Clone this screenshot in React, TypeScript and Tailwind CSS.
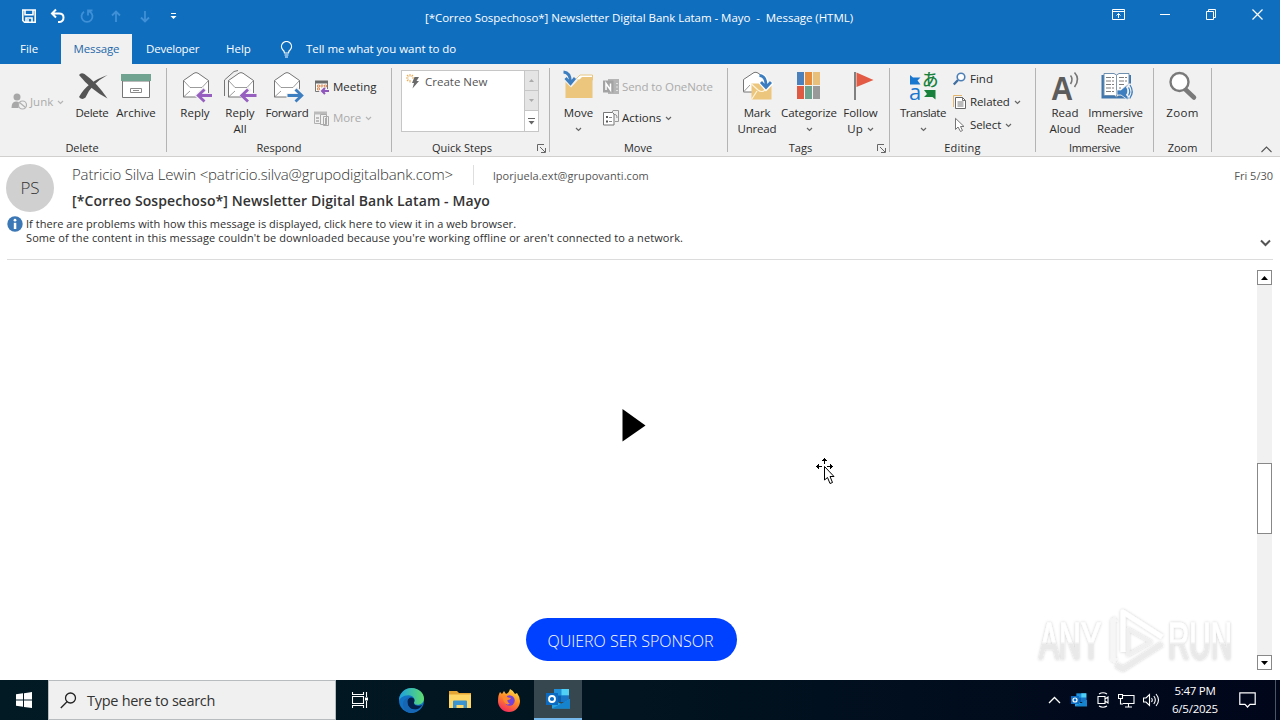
import type { ReactNode } from "react"
import clsx from "clsx"

const Chevron = ({ className = "text-[#666]" }: { className?: string }) => (
  <svg width="7" height="5" viewBox="0 0 7 5" fill="none" stroke="currentColor" strokeWidth="1.2" className={className}>
    <path d="M1 1l2.5 2.5L6 1" />
  </svg>
)

const Icon = ({ children, size = 32 }: { children: ReactNode; size?: number }) => (
  <svg width={size} height={size} viewBox={`0 0 ${size} ${size}`} fill="none" className="shrink-0 overflow-visible">
    {children}
  </svg>
)

type BigProps = { icon: ReactNode; l1: string; l2?: string; chevron?: boolean; className: string }

const BigButton = ({ icon, l1, l2, chevron, className }: BigProps) => (
  <button className={clsx("flex shrink-0 flex-col items-center pt-[6px] text-[11.5px] leading-4 whitespace-nowrap", className)}>
    {icon}
    <span className="mt-[3px] h-4">{l1}</span>
    <span className="flex h-4 items-center gap-1">
      {l2}
      {chevron && <Chevron />}
    </span>
  </button>
)

type SmallProps = { icon: ReactNode; label: string; chevron?: boolean; disabled?: boolean; className?: string }

const SmallButton = ({ icon, label, chevron, disabled, className }: SmallProps) => (
  <button className={clsx("flex items-center text-[11.5px] whitespace-nowrap", disabled && "text-[#ababab]", className)}>
    {icon}
    <span className="ml-[3px]">{label}</span>
    {chevron && <span className="ml-1"><Chevron className={disabled ? "text-[#b5b5b5]" : "text-[#666]"} /></span>}
  </button>
)

type GroupProps = { title: string; className: string; titleClass?: string; launcher?: boolean; children: ReactNode }

const Group = ({ title, className, titleClass, launcher, children }: GroupProps) => (
  <div className={clsx("flex shrink-0", className)}>
    <div className="flex min-w-0 flex-1 flex-col">
      <div className="flex h-[76px]">{children}</div>
      <div className="flex h-4 items-center">
        <span className={clsx("flex-1 text-center text-[11px] leading-4", titleClass)}>{title}</span>
        {launcher && (
          <svg width="9" height="9" viewBox="0 0 9 9" fill="none" stroke="#666" className="mr-[3px]">
            <path d="M.5 7V.5H7M3 3l5 5M8.5 4v4.5H4" />
          </svg>
        )}
      </div>
    </div>
    <div className="mt-1 h-[84px] w-px bg-[#b4b4b4]" />
  </div>
)

const Envelope = () => (
  <g stroke="#757575">
    <path d="M4.5 10.5L15 3.2Q17 2 19 3.2L29.5 10.5V27H4.5Z" fill="#fff" />
    <path d="M4.5 10.5L11 17.5H23L29.5 10.5M4.5 27L11 21" strokeWidth=".9" strokeOpacity=".8" />
  </g>
)

const Spark = () => (
  <path d="M4 0v2.5M4 6v2.5M0 4h2.5M6 4h2M1 1l1.5 1.5M7 1L5.5 2.5M1 7l1.5-1.5" stroke="#e8b05e" strokeWidth="1.1" />
)

const icons = {
  del: (
    <Icon>
      <path d="M3 5Q5 2 8.500 4Q21 13 31.500 28.500Q15 20 3 5Z" fill="#555" />
      <path d="M31.500 5Q15 14 9.500 27.500Q6 30.500 3 27Q11 12 31.500 5Z" fill="#555" />
    </Icon>
  ),
  archive: (
    <Icon>
      <path d="M2.500 11V27.500H29.500V11Z" fill="#fff" stroke="#757575" />
      <path d="M1 4H31V11H1Z" fill="#71a391" />
      <path d="M10.500 18.500h11v4h-11z" stroke="#8a8a8a" />
      <path d="M13 20.500h6" stroke="#8a8a8a" />
    </Icon>
  ),
  reply: (
    <Icon>
      <Envelope />
      <path d="M34 25.500H19.500M26 18.500L19 25.500L26 32.500" stroke="#f1f1f1" strokeWidth="5" />
      <path d="M33 25.500H19.500M25.500 19.500L19.200 25.500L25.500 31.500" stroke="#965fc0" strokeWidth="2.800" />
    </Icon>
  ),
  replyAll: (
    <Icon>
      <path d="M.5 26V10L10 1.500L14 .5" stroke="#757575" />
      <Envelope />
      <path d="M34 25.500H19.500M26 18.500L19 25.500L26 32.500" stroke="#f1f1f1" strokeWidth="5" />
      <path d="M32.500 25.500H18M24 19.500L17.700 25.500L24 31.500" stroke="#965fc0" strokeWidth="2.800" />
    </Icon>
  ),
  forward: (
    <Icon>
      <g transform="translate(-1 0)"><Envelope /></g>
      <path d="M15.500 25.500H31M24.500 18.500L31.500 25.500L24.500 32.500" stroke="#f1f1f1" strokeWidth="5" />
      <path d="M16.500 25.500H30.500M24.500 19.500L30.800 25.500L24.500 31.500" stroke="#3c7ebf" strokeWidth="2.800" />
    </Icon>
  ),
  move: (
    <Icon>
      <path d="M13 9L17 5H29.500V10H13Z" fill="#fff" stroke="#e8c680" />
      <path d="M2.500 10H16L19 7H29.500V28H2.500Z" fill="#ecc67d" />
      <path d="M.5 2Q8.500 2 8.500 13M2.500 8.500L8 14L13 8.500" stroke="#f1f1f1" strokeWidth="5" />
      <path d="M.5 2Q7.500 2.500 7.500 12.500M2.500 8L7.500 13.500L12 8" stroke="#3c7ebf" strokeWidth="2.800" />
    </Icon>
  ),
  mark: (
    <Icon>
      <path d="M2.500 9.500L13 2.500Q15 1.800 17 3L26 10V22H2.500Z" fill="#fff" stroke="#757575" />
      <path d="M2.500 22L9 15" stroke="#999" />
      <path d="M10.500 13.500H30.500V29.500H10.500Z" fill="#ecc67d" />
      <path d="M10.500 14L17 20Q20.500 23 24 20L30.500 14M10.500 29.500L16 21" stroke="#fff4dc" strokeWidth="1.200" />
      <path d="M19 5.500Q26 6 25 18M19.500 12L25 18L31 12" stroke="#fff" strokeWidth="4.800" />
      <path d="M18.500 5.500Q25.500 6 25 17M20 12L25 17.500L30 12" stroke="#3c7ebf" strokeWidth="2.800" />
    </Icon>
  ),
  categorize: (
    <Icon>
      <path d="M4 2h7v13H4z" fill="#4b80bd" />
      <path d="M12 2h7v13h-7z" fill="#e58c3d" />
      <path d="M20 2h7v13h-7z" fill="#e8c07b" />
      <path d="M4 16h7v13H4z" fill="#df5a43" />
      <path d="M12 16h7v13h-7z" fill="#6ea18e" />
      <path d="M20 16h7v13h-7z" fill="#999" />
    </Icon>
  ),
  follow: (
    <Icon>
      <path d="M9 2h2v28H9z" fill="#808080" />
      <path d="M11.500 2.500L28.500 10L11.500 17Z" fill="#e35b45" />
    </Icon>
  ),
  translate: (
    <Icon>
      <path d="M3 5L6 7.500H13.500L10.500 10.500L13.500 14.500H3Z" fill="#1a77d0" />
      <path d="M17 20H28.500V29.500L25.500 27H17L20 24Z" fill="#18823c" />
      <text x="15" y="16" fontSize="16.500" fontWeight="500" fill="#18823c" className="font-['Noto_Sans_CJK_JP',sans-serif]">あ</text>
      <text x="2" y="30" fontSize="22" fill="#1a77d0" className="font-['Open_Sans',sans-serif]">a</text>
    </Icon>
  ),
  readAloud: (
    <Icon>
      <text x="2" y="30" fontSize="33" fontWeight="bold" fill="#5c5c5c" textLength="22" lengthAdjust="spacingAndGlyphs" className="font-['Liberation_Sans',sans-serif]">A</text>
      <path d="M21.500 5.500Q24.500 9 21.500 14M25.500 2.500Q31.500 9 25.500 17" stroke="#777" strokeWidth="1.600" />
    </Icon>
  ),
  reader: (
    <Icon>
      <path d="M1.500 5H31V28.500H1.500Z" fill="#3f76ad" />
      <path d="M4 3.500H14L16.500 5L19 3.500H29V25.500H18.500L16.500 27L14.500 25.500H4Z" fill="#fff" stroke="#6f8faf" />
      <path d="M16.500 5V27" stroke="#8199b3" />
      <path d="M6 7.500h8M6 11h8M6 14.500h8M6 18h8M6 21.500h8M19 7.500h8M19 11h8M19 14.500h6M19 18h2" stroke="#7d7d7d" strokeDasharray="5 1" />
      <path d="M17 20h4l7-6v16l-7-5h-4z" fill="#3c7ebf" stroke="#f1f1f1" strokeWidth=".8" />
      <path d="M27 16q4 5 0 10M29 14q6 7 0 14" stroke="#f1f1f1" strokeWidth="3" />
      <path d="M28.500 17.500q2.500 4 0 8M30 15q4.500 6.500 0 13" stroke="#3c7ebf" strokeWidth="1.200" />
    </Icon>
  ),
  zoom: (
    <Icon>
      <path d="M18.500 19.500L27 27.500" stroke="#7a7a7a" strokeWidth="4.500" strokeLinecap="round" />
      <circle cx="12.500" cy="12" r="9" fill="#fff" stroke="#7a7a7a" strokeWidth="2.400" />
    </Icon>
  ),
  junk: (
    <Icon size={16}>
      <circle cx="6" cy="3" r="3.500" fill="#a8a8a8" />
      <path d="M.5 14Q.5 7 5.500 7.500Q8.500 7.500 8.500 10L7.500 14Z" fill="#a8a8a8" />
      <circle cx="11.500" cy="11" r="4" fill="#f1f1f1" stroke="#b0b0b0" strokeWidth="1.200" />
      <path d="M8.500 8.500l6 5" stroke="#b0b0b0" strokeWidth="1.200" />
    </Icon>
  ),
  meeting: (
    <Icon size={16}>
      <path d="M1.500 2.500h12v10h-12z" fill="#fff" stroke="#777" />
      <path d="M1 1.500h13v3H1z" fill="#6b6b6b" />
      <path d="M3.500 6h2v2h-2zM3.500 9h2v2h-2zM7 6h2v2h-2zM10.500 6h2v2h-2z" stroke="#d47a3c" strokeWidth=".8" />
      <path d="M15 12H8M11 8.500L7.500 12L11 15.500" stroke="#f1f1f1" strokeWidth="4" />
      <path d="M15 12H8.500M11 9L8 12L11 15" stroke="#8f56bb" strokeWidth="2" />
    </Icon>
  ),
  more: (
    <Icon size={16}>
      <path d="M.5 2.500h12v11h-12z" stroke="#b0b0b0" />
      <path d="M0 1.500h13v3H0zM2 7h3v2H2zM2 10h3v2H2z" fill="#bbb" />
      <path d="M6.500 4.500h6v10h-6zM9.500 6.500h5v9h-5z" fill="#f1f1f1" stroke="#aaa" />
      <path d="M11 8h2v6h-2z" fill="#aaa" />
    </Icon>
  ),
  bolt: (
    <Icon size={16}>
      <path d="M8.500 3h4.500L10.500 7H13L6.500 14.500L8 9H6Z" fill="#6a6a6a" />
      <Spark />
    </Icon>
  ),
  oneNote: (
    <Icon size={16}>
      <path d="M5 0h11v15H5z" fill="#b5b5b5" />
      <path d="M0 1.500h10.500v12H0z" fill="#a3a3a3" />
      <path d="M3 11V4.500l4.500 6.500V4.500" stroke="#fff" strokeWidth="1.500" />
      <path d="M13 4.500h2M13 8h2M13 11.500h2" stroke="#e0e0e0" />
    </Icon>
  ),
  actions: (
    <Icon size={16}>
      <path d="M7 2.500h2l1-2h5.500v11H12" stroke="#999" />
      <path d="M.5 2.500h9l1.500 1.500v11H.5z" fill="#fff" stroke="#777" />
      <path d="M3 7h2M3 11.500h2" stroke="#555" strokeWidth="2" />
      <path d="M6 7.500h3M6 11.500h3" stroke="#888" />
      <path d="M11 4.500Q14 4 14 8" stroke="#888" />
    </Icon>
  ),
  find: (
    <Icon size={14}>
      <path d="M.8 12.500L5 8" stroke="#3f6fa0" strokeWidth="2.400" />
      <circle cx="8" cy="5" r="3.800" fill="#fff" stroke="#4d7fb5" strokeWidth="1.600" />
    </Icon>
  ),
  related: (
    <Icon size={14}>
      <path d="M.5 12V.5H9" stroke="#e5b76e" />
      <path d="M2.500 2.500h7l3 3v8h-10z" fill="#fff" stroke="#666" />
      <path d="M9.500 2.500v3h3M4.500 7h6M4.500 9h6M4.500 11h6" stroke="#666" strokeWidth=".9" />
    </Icon>
  ),
  select: (
    <Icon size={14}>
      <path d="M2.500 .3V11.500L5 9L7.500 13.500L9.500 12.500L7.500 8.500H11Z" fill="#fff" stroke="#777" />
    </Icon>
  ),
}

const TitleBar = () => (
  <div className="flex h-[34px] items-start text-white">
    <div className="flex w-[250px] items-center pt-2 pl-[21px]">
      <svg width="16" height="16" viewBox="0 0 16 16" fill="none" stroke="#fff" strokeWidth="1.600">
        <path d="M1.800 2h12.400v12.200H3.500L1.800 12.500zM4 2v4.800h8V2M5 14v-4h6v4" />
        <path d="M7 11v3" />
      </svg>
      <svg width="16" height="16" viewBox="0 0 16 16" fill="none" stroke="#fff" strokeWidth="2" className="ml-[13px]">
        <path d="M6 1.500L2 5.500L6 9.500M2.500 5.500H9Q13.500 5.500 13.500 9.500T9.500 14H8" />
      </svg>
      <svg width="16" height="16" viewBox="0 0 16 16" fill="none" stroke="#3f90d6" strokeWidth="1.800" className="ml-[13px]">
        <path d="M5 3.800A5.500 5.500 0 1 0 11 3.800L9 3M9 7.500V2.500H13.500" />
      </svg>
      <svg width="12" height="16" viewBox="0 0 12 16" fill="none" stroke="#3f90d6" strokeWidth="1.800" className="ml-[15px]">
        <path d="M6 14V4M2 7.500L6 3.500L10 7.500" />
      </svg>
      <svg width="12" height="16" viewBox="0 0 12 16" fill="none" stroke="#3f90d6" strokeWidth="1.800" className="ml-[17px]">
        <path d="M6 3v10M2 9.500L6 13.500L10 9.500" />
      </svg>
      <svg width="7" height="8" viewBox="0 0 7 8" fill="#fff" className="ml-[19px]">
        <path d="M1 1h5v1H1zM.5 4h6L3.500 7z" />
      </svg>
    </div>
    <div className="w-[778px] pt-[10px] text-center text-[11.5px] leading-4 tracking-[-0.04px] whitespace-pre">
      {"[*Correo Sospechoso*] Newsletter Digital Bank Latam - Mayo  -  Message (HTML)"}
    </div>
    <div className="flex flex-1 items-center pt-[9px] pl-[84px]">
      <svg width="13" height="11" viewBox="0 0 13 11" fill="none" stroke="#fff">
        <path d="M.5.5h12v10H.5zM.5 2.500h12M6.500 9V4.500M4.500 6.500l2-2 2 2" />
      </svg>
      <svg width="10" height="11" viewBox="0 0 10 11" stroke="#fff" className="ml-[35px]"><path d="M0 5.500h10" /></svg>
      <svg width="10" height="11" viewBox="0 0 10 11" fill="none" stroke="#fff" className="ml-[36px]">
        <path d="M.5 2.500h7v8h-7zM2.500 2V.5h7v8H8" />
      </svg>
      <svg width="11" height="11" viewBox="0 0 11 11" stroke="#fff" strokeWidth="1.200" className="ml-[36px]">
        <path d="M.5.5l10 10M10.500.5l-10 10" />
      </svg>
    </div>
  </div>
)

const Tabs = () => (
  <div className="flex h-[30px] items-center text-[11.5px] text-white">
    <span className="w-[61px] pl-[20px]">File</span>
    <span className="flex h-full w-[71px] items-center justify-center bg-[#f1f1f1] tracking-[-0.15px] text-[#2468aa]">Message</span>
    <span className="ml-[14px] w-[80px] tracking-[-0.2px]">Developer</span>
    <span className="w-[54px]">Help</span>
    <svg width="13" height="17" viewBox="0 0 13 17" fill="none" stroke="#fff" strokeWidth="1.200">
      <path d="M4.500 12Q4.500 10 2.500 8.500A5 5 0 1 1 10.500 8.500Q8.500 10 8.500 12ZM4.500 14h4M5 16h3" />
    </svg>
    <span className="ml-[13px] tracking-[-0.04px]">Tell me what you want to do</span>
  </div>
)

const Ribbon = () => (
  <div className="flex h-[93px] border-b border-[#d2d0ce] bg-[#f1f1f1] text-[#2b2b2b]">
    <Group title="Delete" className="w-[167px]" titleClass="pr-[2px]">
      <SmallButton icon={icons.junk} label="Junk" chevron disabled className="w-[70px] pl-[11px]" />
      <BigButton icon={icons.del} l1="Delete" className="w-[44px] tracking-[-0.3px]" />
      <BigButton icon={icons.archive} l1="Archive" className="w-[44px]" />
    </Group>
    <Group title="Respond" className="w-[225px]">
      <BigButton icon={icons.reply} l1="Reply" className="ml-[4px] w-[48px]" />
      <BigButton icon={icons.replyAll} l1="Reply" l2="All" className="w-[42px]" />
      <BigButton icon={icons.forward} l1="Forward" className="w-[52px] tracking-[-0.2px]" />
      <div className="flex flex-col gap-[15px] pt-[15px] pl-px">
        <SmallButton icon={icons.meeting} label="Meeting" className="h-4" />
        <SmallButton icon={icons.more} label="More" chevron disabled className="h-4 tracking-[-0.1px]" />
      </div>
    </Group>
    <Group title="Quick Steps" className="w-[158px]" launcher titleClass="pl-[6px] pr-[11px]">
      <div className="mt-[6px] ml-[9px] flex h-[62px] w-[138px] border border-[#c6c6c6] bg-white">
        <div className="flex h-[22px] flex-1 items-center pl-[4px] text-[11.5px] text-[#555]">
          {icons.bolt}
          <span className="ml-[3px]">Create New</span>
        </div>
        <div className="flex w-[14px] flex-col border-l border-[#c6c6c6] bg-[#e4e4e4]">
          <div className="flex h-[20px] items-center justify-center border-b border-[#c6c6c6]">
            <svg width="5" height="3" fill="#aaa"><path d="M0 3L2.500 0L5 3z" /></svg>
          </div>
          <div className="flex h-[20px] items-center justify-center border-b border-[#c6c6c6]">
            <svg width="5" height="3" fill="#aaa"><path d="M0 0L2.500 3L5 0z" /></svg>
          </div>
          <div className="flex flex-1 items-center justify-center bg-white">
            <svg width="7" height="7" fill="#666"><path d="M0 0h7v1H0zM.5 3h6L3.500 6.500z" /></svg>
          </div>
        </div>
      </div>
    </Group>
    <Group title="Move" className="w-[178px]" titleClass="pr-[1px]">
      <BigButton icon={icons.move} l1="Move" chevron className="ml-[6px] w-[45px]" />
      <div className="flex flex-col gap-[15px] pt-[15px] pl-[2px]">
        <SmallButton icon={icons.oneNote} label="Send to OneNote" disabled className="h-4 tracking-[-0.1px]" />
        <SmallButton icon={icons.actions} label="Actions" chevron className="h-4" />
      </div>
    </Group>
    <Group title="Tags" className="w-[162px]" launcher titleClass="pr-[4px]">
      <BigButton icon={icons.mark} l1="Mark" l2="Unread" className="ml-[7px] w-[44px] tracking-[-0.2px]" />
      <BigButton icon={icons.categorize} l1="Categorize" chevron className="w-[60px] tracking-[-0.1px]" />
      <BigButton icon={icons.follow} l1="Follow" l2="Up" chevron className="w-[43px]" />
    </Group>
    <Group title="Editing" className="w-[146px]" titleClass="tracking-[0.2px]">
      <BigButton icon={icons.translate} l1="Translate" chevron className="ml-[6px] w-[54px] tracking-[-0.4px]" />
      <div className="flex flex-col gap-[7px] pt-[7px] pl-[3px]">
        <SmallButton icon={icons.find} label="Find" className="h-4" />
        <SmallButton icon={icons.related} label="Related" chevron className="h-4 tracking-[-0.1px]" />
        <SmallButton icon={icons.select} label="Select" chevron className="h-4 tracking-[-0.1px]" />
      </div>
    </Group>
    <Group title="Immersive" className="w-[118px]" titleClass="tracking-[-0.3px]">
      <BigButton icon={icons.readAloud} l1="Read" l2="Aloud" className="ml-[7px] w-[44px]" />
      <BigButton icon={icons.reader} l1="Immersive" l2="Reader" className="w-[57px] tracking-[-0.2px]" />
    </Group>
    <Group title="Zoom" className="w-[58px]">
      <BigButton icon={icons.zoom} l1="Zoom" className="w-full tracking-[0.4px]" />
    </Group>
    <div className="flex flex-1 items-end justify-end pr-[8px] pb-[3px]">
      <svg width="11" height="7" viewBox="0 0 11 7" fill="none" stroke="#555" strokeWidth="1.100"><path d="M.5 6L5.500 1L10.500 6" /></svg>
    </div>
  </div>
)

const MessageHeader = () => (
  <div className="h-[103px] bg-white px-[7px] pt-[6px]">
    <div className="flex h-[49px]">
      <div className="mt-px -ml-px flex size-12 items-center justify-center rounded-full bg-[#d0d0d0] text-[17px] font-light text-[#333]">PS</div>
      <div className="ml-[18px] flex-1">
        <div className="flex h-6 items-center">
          <span className="-mt-px w-[401px] text-[15px] font-light tracking-[-0.15px] text-[#333]">
            {"Patricio Silva Lewin <patricio.silva@grupodigitalbank.com>"}
          </span>
          <span className="h-5 w-px bg-[#dedede]" />
          <span className="mt-[2px] ml-[19px] text-[11px] tracking-[0.05px] text-[#555]">lporjuela.ext@grupovanti.com</span>
          <span className="mt-[2px] ml-auto text-[11px] text-[#555]">Fri 5/30</span>
        </div>
        <div className="mt-1 h-5 text-[14px] leading-5 font-semibold tracking-[0.1px] text-[#333]">
          [*Correo Sospechoso*] Newsletter Digital Bank Latam - Mayo
        </div>
      </div>
    </div>
    <div className="mt-[5px] flex h-[43px] border-b border-[#dcdcdc]">
      <svg width="16" height="16" viewBox="0 0 16 16" className="-mt-px">
        <circle cx="8" cy="8" r="7.700" fill="#3b78b5" />
        <path d="M6.800 6.800h2.500V13H6.800z" fill="#fff" />
        <circle cx="8" cy="4.200" r="1.400" fill="#fff" />
      </svg>
      <div className="ml-[3px] flex-1 text-[11px] leading-[14px] text-[#2f2f2f]">
        <p className="tracking-[0.035px]">If there are problems with how this message is displayed, click here to view it in a web browser.</p>
        <p className="tracking-[0.095px]">Some of the content in this message couldn't be downloaded because you're working offline or aren't connected to a network.</p>
      </div>
      <svg width="11" height="8" viewBox="0 0 11 8" fill="none" stroke="#555" strokeWidth="2" className="mt-[22px] mr-[2px]"><path d="M1 1.500L5.500 6L10 1.500" /></svg>
    </div>
  </div>
)

const Scrollbar = () => (
  <div className="mt-[10px] mr-[8px] flex h-[400px] w-[15px] shrink-0 flex-col bg-[#f1f1f1]">
    <div className="flex h-[15px] items-center justify-center border border-[#888] bg-white">
      <svg width="7" height="4"><path d="M0 4L3.500 0L7 4z" /></svg>
    </div>
    <div className="mt-[178px] h-[71px] border border-[#888] bg-white" />
    <div className="mt-auto flex h-[15px] items-center justify-center border border-[#888] bg-white">
      <svg width="7" height="4"><path d="M0 0L3.500 4L7 0z" /></svg>
    </div>
  </div>
)

const Watermark = () => (
  <svg width="206" height="72" viewBox="0 0 206 72" className="absolute top-[344px] left-[1033px] overflow-visible font-['Liberation_Sans',sans-serif]">
    <defs>
      <linearGradient id="wm" x1="0" y1="0" x2="0" y2="1">
        <stop offset=".5" stopColor="#fff" />
        <stop offset=".55" stopColor="#e9e9e9" />
      </linearGradient>
      <filter id="glow" x="-10%" y="-20%" width="120%" height="140%">
        <feDropShadow dx="0" dy="0" stdDeviation="1.600" floodColor="#000" floodOpacity=".22" />
      </filter>
    </defs>
    <g filter="url(#glow)">
      <text x="6" y="55" fontSize="51" fill="url(#wm)" stroke="url(#wm)" textLength="62" lengthAdjust="spacingAndGlyphs">ANY</text>
      <text x="135" y="55" fontSize="51" fill="url(#wm)" stroke="url(#wm)" textLength="64" lengthAdjust="spacingAndGlyphs">RUN</text>
      <g fill="none" strokeWidth="5" strokeLinejoin="round">
        <path d="M83 15L80 17V55L83 57" stroke="#f6f6f6" />
        <path d="M90 48V8L129 33" stroke="#fff" />
        <path d="M129 40L90 65L83 61" stroke="#ebebeb" />
        <path d="M95 25L118 38L95 51Z" stroke="#f0f0f0" strokeWidth="3" />
      </g>
    </g>
  </svg>
)

const MoveCursor = () => (
  <svg width="20" height="28" viewBox="0 0 20 28" fill="#000" className="absolute top-[197px] left-[815px]">
    <path d="M9 1h1v1h1v1h1v1H10v3H9V4H7V3h1V2h1zM1 9h1V8h1V7h1v2h3v1H4v2H3v-1H2v-1H1zM18 9h-1V8h-1V7h-1v2h-3v1h3v2h1v-1h1v-1h1z" />
    <path d="M9.500 9.500V23L12.500 20.500L15 26.500L17.500 25.500L15 19.500H19Z" fill="#fff" stroke="#000" />
  </svg>
)

const OutlookLogo = ({ size }: { size: number }) => (
  <svg width={size} height={size} viewBox="0 0 24 24">
    <path d="M8 2h15v13H8z" fill="#1f8fdc" />
    <path d="M15.500 2H23v6.500h-7.500z" fill="#50d0f5" />
    <path d="M8 8.500h7.500V15H8z" fill="#0c5dae" />
    <path d="M15.500 8.500H23V15h-7.500z" fill="#1875c5" />
    <path d="M6 12l9.500 5L24 12v9.500H6z" fill="#28a4e2" />
    <path d="M6 21.500L24 12v9.500z" fill="#1683cf" />
    <path d="M0 6h12v12H0z" fill="#0b6bc3" />
    <circle cx="6" cy="12" r="3" fill="none" stroke="#fff" strokeWidth="1.800" />
  </svg>
)

const Taskbar = () => (
  <div className="flex h-10 items-center bg-linear-to-r from-[#011a24] via-[#01141f] to-[#01061b] text-white">
    <div className="flex w-12 justify-center">
      <svg width="16" height="16" viewBox="0 0 16 16" fill="#fff"><path d="M0 2.300L7 1.300V7.500H0zM8 1.200L16 0V7.500H8zM0 8.500H7V14.700L0 13.700zM8 8.500H16V16L8 14.900z" /></svg>
    </div>
    <div className="flex h-full w-[288px] items-center border border-[#b9bcbe] bg-[#f0f0f0] pl-[11px] text-[14.500px] text-[#333]">
      <svg width="17" height="17" viewBox="0 0 17 17" fill="none" stroke="#222" strokeWidth="1.300"><circle cx="10.500" cy="6" r="5" /><path d="M7 9.800L.8 16" /></svg>
      <span className="mt-px ml-[10px] tracking-[-0.28px]">Type here to search</span>
    </div>
    <div className="flex w-[48px] justify-center">
      <svg width="17" height="16" viewBox="0 0 17 16" fill="none" stroke="#fff" strokeWidth="1.100">
        <path d="M.5 0v2.500h11V0M.5 4.500h11v7H.5zM.5 16v-2.500h11V16M14.500 0v5M14.500 9v7" />
        <path d="M13 5.500h3v3h-3z" fill="#fff" stroke="none" />
      </svg>
    </div>
    <div className="flex w-[54px] justify-center">
      <svg width="25" height="25" viewBox="0 0 24 24">
        <defs>
          <linearGradient id="edgeTop" x1="0" x2="1"><stop offset="0" stopColor="#1ba0e2" /><stop offset="1" stopColor="#5fdc6c" /></linearGradient>
        </defs>
        <circle cx="12" cy="12" r="12" fill="#1272c4" />
        <path d="M0 11C1 4 6 0 12 0C19 0 24 5 24 10C24 14 21 16 18 16C15 16 14 15 14.500 13.500C16 11 14 7 9 7C4 7 0 10 0 13Z" fill="url(#edgeTop)" />
        <path d="M8 13C8 10 10 9 12 9C14.500 9 15.500 12 14.500 13.500C14 15 15 17 18 17C20 17 21.500 16.500 22.500 16C20 20 17 21 14 20.500C10 20 8 16.500 8 13Z" fill="#03204a" />
        <path d="M8 13C8 20 13 22.500 18.500 20.500C17 23 13 24 11 24C6 23 3 19 4 14C4.500 11 8 9 11 9.200C9 10 8 11.500 8 13Z" fill="#1666b4" />
      </svg>
    </div>
    <div className="flex w-[44px] justify-center">
      <svg width="22" height="20" viewBox="0 0 22 20">
        <path d="M0 1h8l2 2h12v14H0z" fill="#e5a634" />
        <path d="M0 4.500h22V18H0z" fill="#ffd766" />
        <path d="M4 18v-6.500q0-1 1-1h12q1 0 1 1V18h-3.500v-3h-7v3z" fill="#3b93cf" />
      </svg>
    </div>
    <div className="flex w-[52px] justify-center pl-px">
      <svg width="24" height="24" viewBox="0 0 24 24">
        <defs>
          <linearGradient id="fox" x1=".8" y1="0" x2=".3" y2="1">
            <stop offset="0" stopColor="#ffe14a" /><stop offset=".45" stopColor="#ff9026" /><stop offset="1" stopColor="#f5285e" />
          </linearGradient>
        </defs>
        <path d="M3 4L5 6L7 3L9 6Q12 5 13 1Q17 3 18 6L20 5Q23 9 23 13A11 11 0 0 1 1 13Q1 7 3 4Z" fill="url(#fox)" />
        <circle cx="12.500" cy="12.500" r="5.200" fill="#7542d8" />
        <path d="M5 8Q9 6.500 11 9.500L14 10Q13 12 10.500 12Q10 15 13 15.500Q9 18 7 14Z" fill="#ff8a2b" />
      </svg>
    </div>
    <div className="flex h-full w-12 items-center justify-center border-b-2 border-[#76b9ed] bg-[#36474f]"><OutlookLogo size={24} /></div>
    <div className="ml-auto flex h-full items-center">
      <svg width="13" height="8" viewBox="0 0 13 8" fill="none" stroke="#fff" strokeWidth="1.300"><path d="M1 7L6.500 1.500L12 7" /></svg>
      <span className="ml-[10px]"><OutlookLogo size={16} /></span>
      <svg width="12" height="16" viewBox="0 0 12 16" fill="none" stroke="#fff" strokeWidth="1.100" className="ml-[10px]">
        <path d="M1 4.500h7v7H1zM8 7l3-2v6L8 9M2 2Q6-.5 10 2M2 14q4 2.500 8 0" />
      </svg>
      <svg width="17" height="15" viewBox="0 0 17 15" fill="none" stroke="#fff" strokeWidth="1.100" className="ml-[9px]">
        <path d="M5 2.500h11v8H5M10.500 10.500v3M7 14h7M.5 1.500h4v4h-4zM2.500 5.500V11H5" />
      </svg>
      <svg width="17" height="14" viewBox="0 0 17 14" fill="none" stroke="#fff" strokeWidth="1.100" className="ml-[8px]">
        <path d="M.5 5h2.500L6.500 1.500v11L3 9H.5zM8.500 5q1.500 2 0 4M10.800 3q3 4 0 8M13 1q5 6 0 12" />
      </svg>
      <div className="ml-[11px] w-[48px] text-center text-[11.5px] leading-[18px] tracking-[-0.25px]">
        <div>5:47 PM</div>
        <div>6/5/2025</div>
      </div>
      <svg width="17" height="16" viewBox="0 0 17 16" fill="none" stroke="#fff" strokeWidth="1.200" className="ml-[20px]">
        <path d="M.8.8h15.400v11.500H11L8.500 15L6 12.300H.8z" />
      </svg>
      <span className="mr-[4px] ml-[19px] h-full w-px bg-[#4b5563]" />
    </div>
  </div>
)

const App = () => {
  return (
    <div className="flex h-[720px] w-[1280px] flex-col overflow-hidden bg-white font-['Open_Sans','Noto_Sans',sans-serif]">
      <div className="bg-[#106ebe]">
        <TitleBar />
        <Tabs />
      </div>
      <Ribbon />
      <MessageHeader />
      <div className="relative flex h-[420px]">
        <div className="flex flex-1 flex-col items-center pt-[149px] pl-[6px]">
          <svg width="24" height="33" viewBox="0 0 24 33" className="ml-[5px]"><path d="M.5 0L23.500 16.500L.5 32.500z" /></svg>
          <button className="mt-[176px] flex h-[43px] w-[211px] items-center justify-center rounded-full bg-[#0040ff] pt-[2px] pr-[2px] text-[16px] font-light text-white">
            QUIERO SER SPONSOR
          </button>
        </div>
        <Scrollbar />
        <MoveCursor />
        <Watermark />
      </div>
      <Taskbar />
    </div>
  )
}

export default App
